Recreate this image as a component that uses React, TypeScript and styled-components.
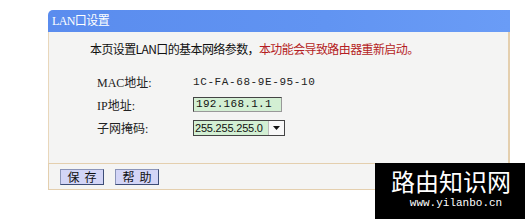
import React from "react";
import styled, { createGlobalStyle } from "styled-components";

const Global = createGlobalStyle`
  html, body { margin: 0; padding: 0; background: #ffffff; }
  body { width: 525px; height: 219px; overflow: hidden; position: relative;
    font-family: "Liberation Serif", "Noto Sans CJK SC", serif; }
`;

const CJK = `"Noto Sans CJK SC", "Noto Sans CJK TC", sans-serif`;
const MONO = `"Liberation Mono", "Noto Sans CJK SC", monospace`;

const Page = styled.div`
  padding: 10px 0 0 48px;
`;

const Panel = styled.div`
  width: 462px;
  box-sizing: border-box;
`;

const Header = styled.div`
  height: 22px;
  line-height: 22px;
  padding-left: 4px;
  border-top-left-radius: 5px;
  background: linear-gradient(90deg, #5a8cee 0%, #6194f2 60%, #6a9cf6 100%);
  color: #ffffff;
  font-family: "Liberation Serif", "Noto Sans CJK SC", serif;
  font-size: 12px;
  letter-spacing: -0.6px;
`;

const Body = styled.div`
  background: #f4f4f3;
  border-left: 1px solid #e9d7bb;
  border-right: 2px solid #e4cfae;
  padding: 9px 0 24px 0;
`;

const Intro = styled.div`
  margin-left: 41px;
  font-family: ${CJK};
  font-size: 12px;
  line-height: 16px;
  color: #111;
  letter-spacing: -0.6px;
`;

const Warn = styled.span`
  color: #b41d24;
`;

const Form = styled.div`
  display: grid;
  grid-template-columns: 96px 1fr;
  grid-auto-rows: 23px;
  align-items: center;
  margin: 13px 0 0 48px;
`;

const Label = styled.div`
  font-family: "Liberation Serif", ${CJK};
  font-size: 12px;
  color: #222;
`;

const Value = styled.div`
  font-family: ${MONO};
  font-size: 11px;
  color: #222;
  letter-spacing: 0.6px;
`;

const Field = styled.div`
  width: 89px;
  height: 15px;
  box-sizing: border-box;
  border: 1px solid #444;
  border-right-color: #999;
  border-bottom-color: #999;
  background: #d3efd3;
  font-family: ${MONO};
  font-size: 11px;
  line-height: 13px;
  padding-left: 2px;
  color: #111;
  letter-spacing: 0.3px;
`;

const Select = styled.div`
  width: 92px;
  height: 16px;
  box-sizing: border-box;
  border: 1px solid #444;
  display: flex;
  align-items: stretch;
  background: #d3efd3;
`;

const SelectText = styled.div`
  flex: 1;
  font-family: "Liberation Sans", sans-serif;
  font-size: 11px;
  line-height: 14px;
  padding-left: 1px;
  color: #111;
  letter-spacing: -0.2px;
`;

const Arrow = styled.div`
  width: 15px;
  background: #f8f8f8;
  border-left: 1px solid #bbb;
  display: flex;
  align-items: center;
  justify-content: center;
`;

const Footer = styled.div`
  background: #f4f4f3;
  border: 1px solid #e4cfae;
  border-right-width: 2px;
  padding: 5px 11px 4px;
  display: flex;
  gap: 11px;
`;

const Button = styled.div`
  width: 44px;
  height: 16px;
  box-sizing: border-box;
  border: 1px solid #3d4d77;
  border-top-color: #8a94b8;
  border-left-color: #8a94b8;
  background: #d3d5f6;
  font-family: ${CJK};
  font-size: 12px;
  line-height: 14px;
  text-align: center;
  letter-spacing: 5px;
  text-indent: 5px;
  color: #111;
`;

const Mark = styled.div`
  position: absolute;
  left: 375px;
  top: 163px;
  width: 150px;
  height: 56px;
  background: #000;
  color: #fff;
  display: flex;
  flex-direction: column;
  align-items: center;
`;

const MarkTitle = styled.div`
  font-family: "Noto Sans CJK SC", sans-serif;
  font-size: 24px;
  line-height: 30px;
  margin-top: 3px;
  margin-left: 2px;
`;

const MarkUrl = styled.div`
  font-family: "Liberation Mono", monospace;
  font-size: 11px;
  line-height: 14px;
  margin-left: 12px;
  letter-spacing: 0px;
`;

export default function App() {
  return (
    <>
      <Global />
      <Page>
        <Panel>
          <Header>LAN口设置</Header>
          <Body>
            <Intro>
              本页设置LAN口的基本网络参数，<Warn>本功能会导致路由器重新启动。</Warn>
            </Intro>
            <Form>
              <Label>MAC地址:</Label>
              <Value>1C-FA-68-9E-95-10</Value>
              <Label>IP地址:</Label>
              <Field>192.168.1.1</Field>
              <Label>子网掩码:</Label>
              <Select>
                <SelectText>255.255.255.0</SelectText>
                <Arrow>
                  <svg width="7" height="4" viewBox="0 0 7 4">
                    <path d="M0 0 H7 L3.5 4 Z" fill="#111" />
                  </svg>
                </Arrow>
              </Select>
            </Form>
          </Body>
          <Footer>
            <Button>保存</Button>
            <Button>帮助</Button>
          </Footer>
        </Panel>
      </Page>
      <Mark>
        <MarkTitle>路由知识网</MarkTitle>
        <MarkUrl>www.yilanbo.cn</MarkUrl>
      </Mark>
    </>
  );
}
